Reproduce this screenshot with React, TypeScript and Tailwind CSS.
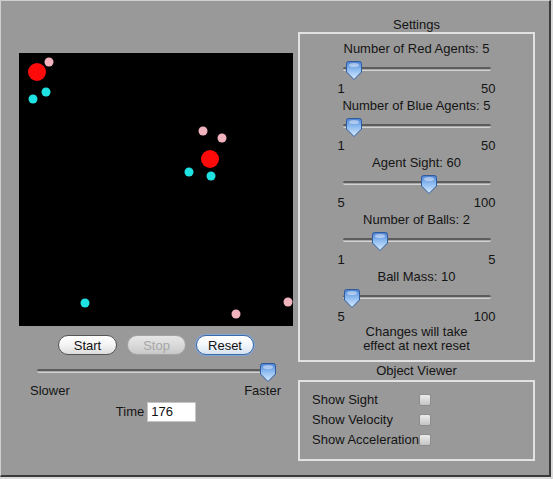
import React, { useId } from 'react';

// ─── Simulation state (snapshot) ───────────────────────────────────────────────
const BALLS = [
  { x: 18, y: 19 },
  { x: 191, y: 106 },
];

const RED_AGENTS = [
  { x: 30, y: 9 },
  { x: 184, y: 78 },
  { x: 203, y: 85 },
  { x: 217, y: 261 },
  { x: 269, y: 249 },
];

const BLUE_AGENTS = [
  { x: 27, y: 39 },
  { x: 14, y: 46 },
  { x: 170, y: 119 },
  { x: 192, y: 123 },
  { x: 66, y: 250 },
];

const SETTINGS = [
  { label: 'Number of Red Agents: 5', min: '1', max: '50', thumb: 'left-[3px]' },
  { label: 'Number of Blue Agents: 5', min: '1', max: '50', thumb: 'left-[3px]' },
  { label: 'Agent Sight: 60', min: '5', max: '100', thumb: 'left-[78px]' },
  { label: 'Number of Balls: 2', min: '1', max: '5', thumb: 'left-[29px]' },
  { label: 'Ball Mass: 10', min: '5', max: '100', thumb: 'left-[1px]' },
];

const VIEWER = ['Show Sight', 'Show Velocity', 'Show Acceleration'];

// ─── Aqua bits ─────────────────────────────────────────────────────────────────
const Thumb: React.FC<{ className: string }> = ({ className }) => {
  const id = useId();
  return (
    <svg width="16" height="19" viewBox="0 0 16 19" className={`absolute top-[5px] ${className}`}>
      <defs>
        <linearGradient id={id} x1="0" y1="0" x2="0" y2="1">
          <stop offset="0" stopColor="#4a7fd0" />
          <stop offset="0.4" stopColor="#86b6ee" />
          <stop offset="1" stopColor="#d8ecff" />
        </linearGradient>
      </defs>
      <path
        d="M2.5 0.5H13.5Q15.5 0.5 15.5 2.5V11L8 18.5L0.5 11V2.5Q0.5 0.5 2.5 0.5Z"
        fill={`url(#${id})`}
        stroke="#2f5a9c"
      />
      <ellipse cx="8" cy="4" rx="5" ry="2" fill="#ffffff" opacity="0.45" />
    </svg>
  );
};

const Slider: React.FC<{ width: string; thumb: string }> = ({ width, thumb }) => (
  <div className={`relative h-[25px] ${width} flex items-center`}>
    <div className="w-full h-[4px] rounded-full bg-[#a9a9a9] border-t-2 border-t-[#5c5c5c] border-b border-b-[#d2d2d2]" />
    <Thumb className={thumb} />
  </div>
);

const AquaButton: React.FC<{ label: string; variant?: 'normal' | 'disabled' | 'default'; width: string }> = ({
  label,
  variant = 'normal',
  width,
}) => {
  const styles = {
    normal: 'border-[#555] text-[#111] bg-gradient-to-b from-white via-[#f4f4f4] to-[#dcdcdc]',
    disabled: 'border-[#a4a4a4] text-[#a6a6a6] bg-gradient-to-b from-[#e6e6e6] via-[#dadada] to-[#c8c8c8]',
    default:
      'border-[#3d6aa8] text-[#111] bg-gradient-to-b from-white via-[#f2f6fb] to-[#d6e2ef] shadow-[0_0_0_1px_#7ea6d8]',
  }[variant];
  return (
    <button className={`h-[20px] ${width} rounded-full border text-[13px] leading-none ${styles}`}>{label}</button>
  );
};

const Checkbox: React.FC = () => (
  <span className="w-[12px] h-[12px] rounded-[2px] border border-[#8c8c8c] bg-gradient-to-b from-[#ececec] to-[#c4c4c4]" />
);

// ─── App ───────────────────────────────────────────────────────────────────────
export default function App() {
  return (
    <div
      className="w-[553px] h-[479px] bg-[#dadada] text-[13px] text-[#141414]"
      style={{ fontFamily: '"Liberation Sans", Arial, sans-serif' }}
    >
      <div className="w-[551px] h-[477px] flex bg-[#999999] border-t border-l border-[#d0d0d0] border-r-2 border-b-2 border-r-[#3a3a3a] border-b-[#3a3a3a]">
        {/* ── Simulation side ── */}
        <div className="w-[297px] pl-[18px] pt-[52px] flex flex-col">
          <svg width="274" height="273" className="block bg-black">
            {BALLS.map((b, i) => (
              <circle key={`b${i}`} cx={b.x} cy={b.y} r="9" fill="#ff0a0a" />
            ))}
            {RED_AGENTS.map((a, i) => (
              <circle key={`r${i}`} cx={a.x} cy={a.y} r="4.5" fill="#f1b3be" />
            ))}
            {BLUE_AGENTS.map((a, i) => (
              <circle key={`c${i}`} cx={a.x} cy={a.y} r="4.5" fill="#1fe2e2" />
            ))}
          </svg>

          <div className="w-[274px] mt-[9px] flex justify-center gap-[10px]">
            <AquaButton label="Start" width="w-[59px]" />
            <AquaButton label="Stop" variant="disabled" width="w-[59px]" />
            <AquaButton label="Reset" variant="default" width="w-[58px]" />
          </div>

          <div className="ml-[18px] mt-[3px]">
            <Slider width="w-[235px]" thumb="left-[223px]" />
          </div>

          <div className="ml-[11px] w-[251px] h-[15px] leading-[15px] flex justify-between">
            <span>Slower</span>
            <span>Faster</span>
          </div>

          <div className="w-[274px] mt-[4px] flex items-center justify-center gap-[3px]">
            <span>Time</span>
            <div className="w-[49px] h-[20px] bg-white border border-[#c4c4c4] pl-[3px] leading-[18px] text-[#111]">
              176
            </div>
          </div>
        </div>

        {/* ── Settings side ── */}
        <div className="w-[237px] flex flex-col">
          <div className="h-[31px] pt-[16px] leading-[15px] text-center">Settings</div>

          <div className="h-[330px] border-2 border-[#e2e2e2] pt-[7px] flex flex-col">
            {SETTINGS.map(s => (
              <div key={s.label} className="h-[57px] flex flex-col items-center">
                <div className="h-[15px] leading-[15px]">{s.label}</div>
                <Slider width="w-[148px]" thumb={s.thumb} />
                <div className="w-[158px] h-[15px] leading-[15px] flex justify-between">
                  <span>{s.min}</span>
                  <span>{s.max}</span>
                </div>
              </div>
            ))}
            <div className="-mt-[1px] text-center leading-[14px]">
              Changes will take
              <br />
              effect at next reset
            </div>
          </div>

          <div className="h-[18px] leading-[18px] text-center">Object Viewer</div>

          <div className="h-[81px] border-2 border-[#e2e2e2] pt-[8px] pl-[12px] flex flex-col">
            {VIEWER.map(v => (
              <div key={v} className="h-[20px] flex items-center">
                <span className="w-[107px]">{v}</span>
                <Checkbox />
              </div>
            ))}
          </div>
        </div>
      </div>
    </div>
  );
}
